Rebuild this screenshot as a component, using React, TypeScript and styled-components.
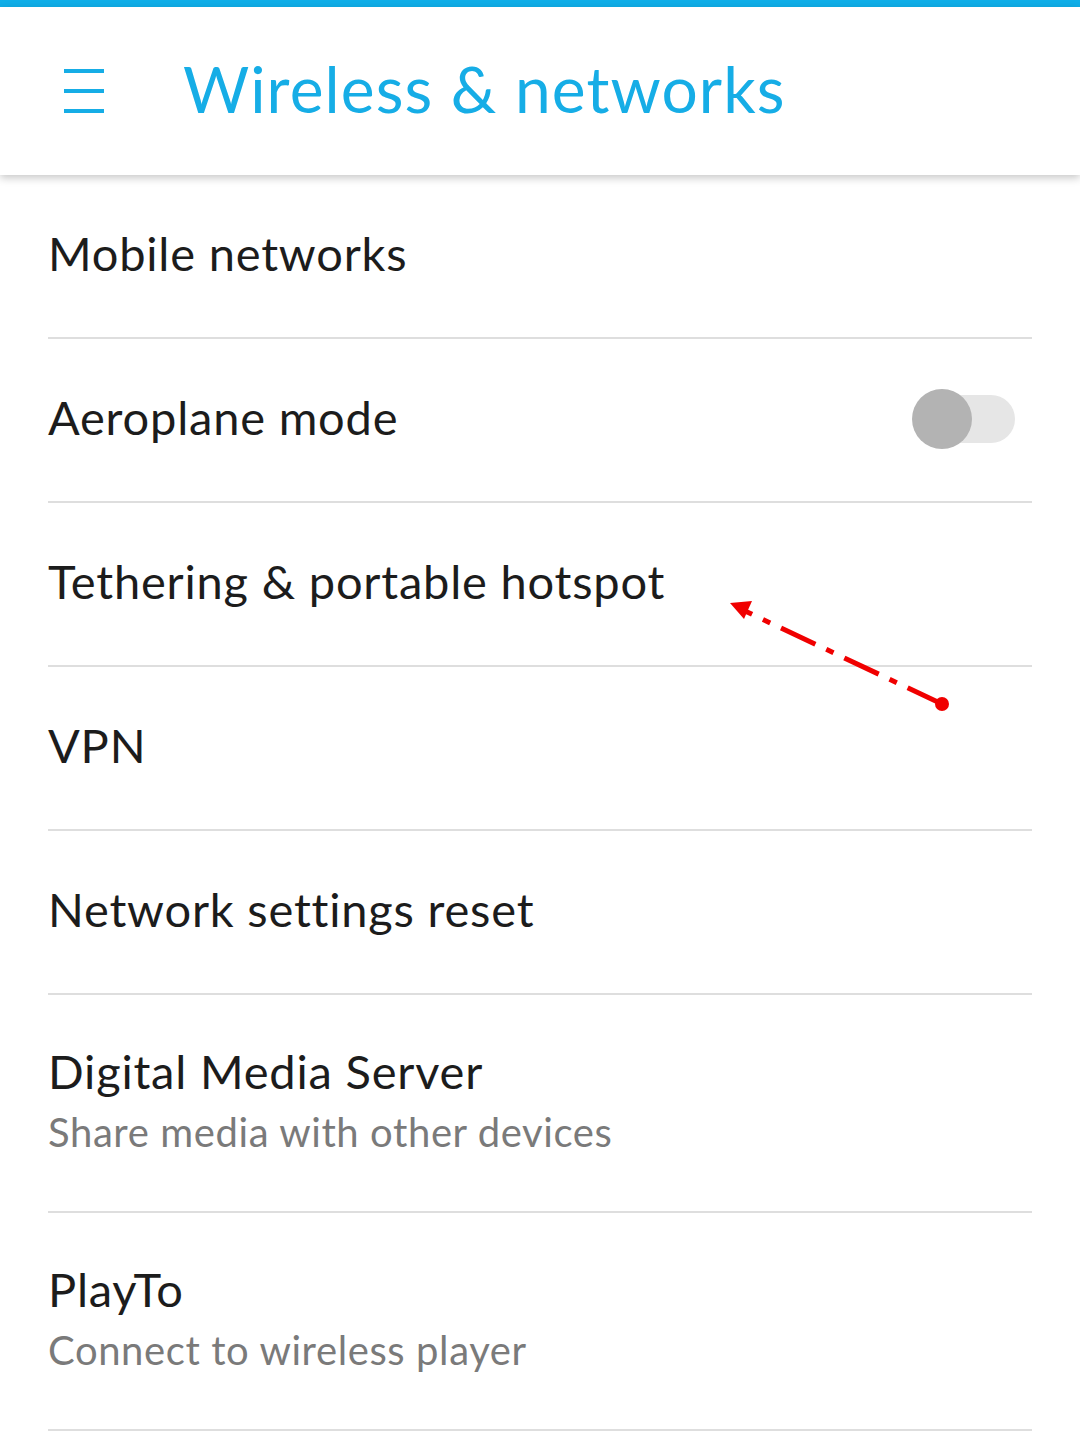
import React from "react";
import styled, { createGlobalStyle } from "styled-components";

const Global = createGlobalStyle`
  html, body { margin: 0; padding: 0; background: #ffffff; }
  body { font-family: Lato, "Noto Sans", sans-serif; }
  * { box-sizing: border-box; }
`;

const Page = styled.div`
  position: relative;
  width: 1080px;
  min-height: 1433px;
  background: #fff;
  overflow: hidden;
`;

const TopBar = styled.div`
  height: 7px;
  background: #10aee8;
`;

const Header = styled.header`
  position: relative;
  z-index: 2;
  height: 168px;
  display: flex;
  align-items: center;
  padding-left: 64px;
  background: #fff;
  box-shadow: 0 3px 8px rgba(0, 0, 0, 0.22);
`;

const Burger = styled.div`
  width: 40px;
  height: 44px;
  display: flex;
  flex-direction: column;
  justify-content: space-between;
  margin-right: 79px;
  span {
    display: block;
    height: 4px;
    background: #16ade6;
  }
`;

const Title = styled.h1`
  margin: 0;
  font-family: Lato, "Noto Sans", sans-serif;
  font-weight: 400;
  font-size: 64px;
  letter-spacing: 1.1px;
  color: #16ade6;
  margin-top: -6px;
`;

const List = styled.div`
  padding: 0 48px;
`;

const Row = styled.div<{ $tall?: boolean }>`
  height: ${(p) => (p.$tall ? 218 : 164)}px;
  display: flex;
  align-items: center;
  justify-content: space-between;
  border-bottom: 2px solid #dedede;
`;

const Texts = styled.div`
  display: flex;
  flex-direction: column;
  gap: 9px;
  margin-top: -6px;
`;

const Label = styled.div`
  font-family: Lato, "Noto Sans", sans-serif;
  font-size: 47px;
  color: #1c1c1c;
  letter-spacing: 0.8px;
  line-height: 54px;
`;

const Sub = styled.div`
  font-family: Lato, "Noto Sans", sans-serif;
  font-size: 40px;
  color: #7a7a7a;
  letter-spacing: 0.6px;
  line-height: 50px;
`;

const Switch = styled.div`
  position: relative;
  width: 103px;
  height: 60px;
  margin-right: 17px;
  margin-top: -2px;
  &::before {
    content: "";
    position: absolute;
    left: 12px;
    right: 0;
    top: 6px;
    height: 48px;
    border-radius: 24px;
    background: #e6e6e6;
  }
  &::after {
    content: "";
    position: absolute;
    left: 0;
    top: 0;
    width: 60px;
    height: 60px;
    border-radius: 50%;
    background: #b3b3b3;
  }
`;

const Arrow = styled.svg`
  position: absolute;
  left: 0;
  top: 0;
  pointer-events: none;
  z-index: 3;
`;

const rows: { label: string; sub?: string; toggle?: boolean }[] = [
  { label: "Mobile networks" },
  { label: "Aeroplane mode", toggle: true },
  { label: "Tethering & portable hotspot" },
  { label: "VPN" },
  { label: "Network settings reset" },
  { label: "Digital Media Server", sub: "Share media with other devices" },
  { label: "PlayTo", sub: "Connect to wireless player" },
];

export default function App() {
  return (
    <Page>
      <Global />
      <TopBar />
      <Header>
        <Burger>
          <span />
          <span />
          <span />
        </Burger>
        <Title>Wireless &amp; networks</Title>
      </Header>
      <List>
        {rows.map((r) => (
          <Row key={r.label} $tall={!!r.sub}>
            <Texts>
              <Label>{r.label}</Label>
              {r.sub && <Sub>{r.sub}</Sub>}
            </Texts>
            {r.toggle && <Switch />}
          </Row>
        ))}
      </List>
      <Arrow width="1080" height="1433" viewBox="0 0 1080 1433">
        <line
          x1="942"
          y1="704"
          x2="745"
          y2="611"
          stroke="#f00000"
          strokeWidth="5"
          strokeDasharray="38 12 8 12"
        />
        <polygon points="730,603 752,601 744,619" fill="#f00000" />
        <circle cx="942" cy="704" r="7" fill="#f00000" />
      </Arrow>
    </Page>
  );
}
